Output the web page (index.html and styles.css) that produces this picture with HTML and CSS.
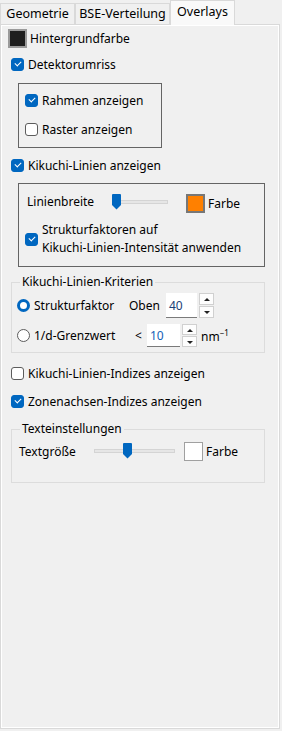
FILE: index.html
```html
<!DOCTYPE html>
<html lang="de">
<head>
<meta charset="utf-8">
<title>Overlays</title>
<link rel="stylesheet" href="styles.css">
</head>
<body>
  <div class="tabs">
    <div class="tab tab-geo">Geometrie</div>
    <div class="tab tab-bse">BSE-Verteilung</div>
    <div class="tab tab-ovl on">Overlays</div>
  </div>

  <div class="pane">
    <div class="row row-bg">
      <span class="swatch dark"></span>
      <span class="label">Hintergrundfarbe</span>
    </div>

    <label class="row check-row row-det">
      <span class="cb checked"></span>Detektorumriss
    </label>

    <div class="box box-det">
      <label class="row check-row row-frame">
        <span class="cb checked"></span>Rahmen anzeigen
      </label>
      <label class="row check-row row-grid">
        <span class="cb"></span>Raster anzeigen
      </label>
    </div>

    <label class="row check-row row-kik">
      <span class="cb checked"></span>Kikuchi-Linien anzeigen
    </label>

    <div class="box box-kik">
      <div class="row row-width">
        <span class="lw-label">Linienbreite</span>
        <div class="slider slider-lw">
          <div class="track"></div>
          <svg class="thumb" style="left:0" width="9" height="16" viewBox="0 0 9 16"><path d="M1 0h7a1 1 0 0 1 1 1v10l-4.5 4.5L0 11V1a1 1 0 0 1 1-1z" fill="#0067c0"/></svg>
        </div>
        <span class="swatch orange"></span>
        <span class="label">Farbe</span>
      </div>
      <label class="row check-row row-struct">
        <span class="cb checked"></span>
        <span class="two-line">Strukturfaktoren auf<br>Kikuchi-Linien-Intensität anwenden</span>
      </label>
    </div>

    <fieldset class="group group-crit">
      <legend>Kikuchi-Linien-Kriterien</legend>
      <div class="row crit-row crit-1">
        <span class="radio on"></span>
        <span class="crit-name">Strukturfaktor</span>
        <span class="crit-op">Oben</span>
        <div class="spin spin-40">
          <span class="spin-val">40</span>
          <div class="spin-btns"><span class="up"></span><span class="down"></span></div>
        </div>
      </div>
      <div class="row crit-row crit-2">
        <span class="radio"></span>
        <span class="crit-name">1/d-Grenzwert</span>
        <span class="crit-op lt">&lt;</span>
        <div class="spin spin-10">
          <span class="spin-val">10</span>
          <div class="spin-btns"><span class="up"></span><span class="down"></span></div>
        </div>
        <span class="unit">nm<sup>−1</sup></span>
      </div>
    </fieldset>

    <label class="row check-row row-idx">
      <span class="cb"></span>Kikuchi-Linien-Indizes anzeigen
    </label>
    <label class="row check-row row-zone">
      <span class="cb checked"></span>Zonenachsen-Indizes anzeigen
    </label>

    <fieldset class="group group-text">
      <legend>Texteinstellungen</legend>
      <div class="row row-size">
        <span class="size-label">Textgröße</span>
        <div class="slider slider-ts">
          <div class="track"></div>
          <svg class="thumb" style="left:29px" width="9" height="16" viewBox="0 0 9 16"><path d="M1 0h7a1 1 0 0 1 1 1v10l-4.5 4.5L0 11V1a1 1 0 0 1 1-1z" fill="#0067c0"/></svg>
        </div>
        <span class="swatch white"></span>
        <span class="label">Farbe</span>
      </div>
    </fieldset>
  </div>
</body>
</html>
```

FILE: styles.css
```css
body
{
	margin: 0;
	background: #f0f0f0;
	font-family: "Noto Sans", "Open Sans", sans-serif;
	font-size: 12px;
	color: #000;
	width: 282px;
	height: 731px;
	overflow: hidden;
}

/* tab strip */
.tabs
{
	display: flex;
	align-items: flex-end;
	height: 24px;
}
.tab
{
	box-sizing: border-box;
	height: 21px;
	line-height: 19px;
	border: 1px solid #d9d9d9;
	border-bottom: none;
	text-align: center;
	font-size: 12.5px;
}
.tab-geo { width: 75px; }
.tab-bse { width: 95px; }
.tab-ovl { width: 65px; }
.tab.on
{
	height: 25px;
	line-height: 22px;
	margin-bottom: -1px;
	background: #f9f9f9;
	position: relative;
	z-index: 2;
}

/* main pane */
.pane
{
	box-sizing: border-box;
	width: 280px;
	height: 705px;
	border: 1px solid #d9d9d9;
	box-shadow: inset 0 0 0 1px #fff;
	background: #f0f0f0;
	padding: 0 0 0 1px;
}

.row
{
	display: flex;
	align-items: center;
}
.check-row
{
	height: 21px;
	padding-left: 9px;
}

.cb
{
	box-sizing: border-box;
	width: 13px;
	height: 13px;
	border: 1px solid #5c5c5c;
	border-radius: 3px;
	background: #fff;
	margin-right: 4px;
	flex: none;
	position: relative;
}
.cb.checked
{
	border-color: #0067c0;
	background: #0067c0;
}
.cb.checked::after
{
	content: "";
	position: absolute;
	left: 3px;
	top: 2px;
	width: 5px;
	height: 3px;
	border-left: 1px solid #fff;
	border-bottom: 1px solid #fff;
	transform: rotate(-45deg);
}

.swatch
{
	box-sizing: border-box;
	width: 19px;
	height: 19px;
	flex: none;
	border: 2px solid #8c8c8c;
}
.swatch.dark { background: #1e1e1e; border-color: #9a9a9a; }
.swatch.orange { background: #ff8000; border-color: #777; }
.swatch.white { background: #fff; border: 1px solid #a0a0a0; }
.label { margin-left: 3px; }

.row-bg
{
	height: 19px;
	margin-top: 4px;
	padding-left: 6px;
}
.row-det { margin-top: 6px; }

/* dark framed boxes */
.box
{
	box-sizing: border-box;
	border: 1px solid #646464;
	margin-left: 16px;
}
.box-det
{
	width: 144px;
	height: 65px;
	margin-top: 8px;
	padding-top: 6px;
}
.box-det .check-row { padding-left: 6px; }
.row-grid { margin-top: 8px; }

.row-kik { margin-top: 7px; }

.box-kik
{
	width: 247px;
	height: 84px;
	margin-top: 7px;
	padding-top: 8px;
}
.row-width
{
	height: 22px;
	padding-left: 8px;
}
.lw-label { width: 85px; margin-top: -3px; }

.slider
{
	position: relative;
	height: 16px;
	flex: none;
}
.slider .track
{
	position: absolute;
	left: 0;
	right: 0;
	top: 6px;
	background: #e6e6e6;
	border: 1px solid #d4d4d4;
	box-sizing: border-box;
	height: 4px;
}
.slider .thumb
{
	position: absolute;
	top: 0;
}
.slider-lw
{
	width: 56px;
	margin-right: 18px;
	margin-top: -2px;
}

.row-struct
{
	margin-top: 6px;
	height: 38px;
	padding-left: 6px;
}
.two-line { line-height: 18px; }

/* light group boxes */
.group
{
	box-sizing: border-box;
	width: 254px;
	margin: 0 0 0 9px;
	padding: 0;
	border: 1px solid #dcdcdc;
	min-inline-size: 0;
}
.group legend
{
	padding: 0 2px;
	margin-left: 8px;
	line-height: 14px;
}
.group-crit
{
	height: 78px;
	margin-top: 8px;
}
.crit-row
{
	height: 25px;
	padding-left: 5px;
}
.crit-1 { margin-top: 4px; }
.crit-2 { margin-top: 5px; }

.radio
{
	box-sizing: border-box;
	width: 13px;
	height: 13px;
	border-radius: 50%;
	border: 1px solid #5c5c5c;
	background: #fff;
	flex: none;
	margin-right: 4px;
}
.radio.on
{
	border: 3.5px solid #0067c0;
	background: #fff;
}
.crit-name { width: 95px; }
.crit-op { width: 37px; }
.crit-op.lt { width: 12px; margin-left: 6px; }

.spin
{
	display: flex;
	height: 25px;
}
.spin-val
{
	box-sizing: border-box;
	width: 31px;
	height: 25px;
	background: #fff;
	border-bottom: 1px solid #7a7a7a;
	padding: 4px 0 0 3px;
	color: #1b3f78;
}
.spin-10 { height: 23px; }
.spin-10 .spin-val { height: 23px; padding-top: 3px; width: 33px; color: #1462b8; }
.spin-btns
{
	display: flex;
	flex-direction: column;
	margin-left: 2px;
	gap: 1px;
}
.spin-btns span
{
	box-sizing: border-box;
	width: 15px;
	flex: 1;
	background: #fdfdfd;
	border: 1px solid #d0d0d0;
	position: relative;
}
.spin-btns .up::after,
.spin-btns .down::after
{
	content: "";
	position: absolute;
	left: 4px;
	top: 4px;
	border-left: 3px solid transparent;
	border-right: 3px solid transparent;
}
.spin-btns .up::after { border-bottom: 3px solid #222; }
.spin-btns .down::after { border-top: 3px solid #222; }

.unit { margin-left: 4px; }
.unit sup { font-size: 8px; }

.row-idx { margin-top: 10px; }
.row-zone { margin-top: 7px; }

.group-text
{
	height: 61px;
	margin-top: 10px;
}
.row-size
{
	height: 22px;
	margin-top: 4px;
	padding-left: 7px;
}
.size-label { width: 75px; }
.slider-ts
{
	width: 81px;
	margin-right: 9px;
}
```
